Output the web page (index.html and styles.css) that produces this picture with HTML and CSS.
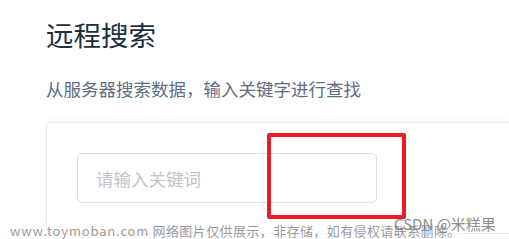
FILE: index.html
```html
<!DOCTYPE html>
<html lang="zh">
<head>
<meta charset="utf-8">
<link rel="stylesheet" href="styles.css">
</head>
<body>
<div class="page">
  <h3 class="title">远程搜索</h3>
  <p class="desc">从服务器搜索数据，输入关键字进行查找</p>
  <div class="card">
    <div class="demo">
      <div class="input"><span class="placeholder">请输入关键词</span></div>
    </div>
  </div>
</div>
<div class="mark"></div>
<div class="wm"><span class="wm-url">www.toymoban.com</span> 网络图片仅供展示，非存储，如有侵权请联系删除。</div>
<div class="csdn">CSDN @米糕果</div>
</body>
</html>
```
FILE: styles.css
```css
html, body {
  margin: 0;
  padding: 0;
  background: #ffffff;
  overflow: hidden;
  width: 509px;
  height: 239px;
}
body {
  font-family: "Noto Sans CJK SC", "Noto Sans", sans-serif;
  position: relative;
}
.page {
  padding: 14px 0 0 46px;
}
.title {
  margin: 0;
  font-size: 27.5px;
  font-weight: 400;
  line-height: 40px;
  color: #1f2f3d;
}
.desc {
  margin: 22px 0 0;
  font-size: 17.5px;
  line-height: 26px;
  color: #5e6d82;
}
.card {
  margin-top: 20px;
  height: 118px;
  border: 1px solid #e8e8ee;
  border-right: none;
  border-bottom: none;
  border-radius: 5px 0 0 0;
  box-shadow: 0 -2px 6px rgba(0, 0, 0, 0.03);
  box-sizing: border-box;
}
.demo {
  padding: 30px;
  border-bottom: 1px solid #e3e7f0;
}
.input {
  width: 300px;
  height: 50px;
  box-sizing: border-box;
  border: 1px solid #dcdfe6;
  border-radius: 5px;
  padding: 0 18px;
  display: flex;
  align-items: center;
}
.placeholder {
  font-size: 17.5px;
  color: #c0c4cc;
}
.mark {
  position: absolute;
  left: 267px;
  top: 133px;
  width: 139px;
  height: 86px;
  box-sizing: border-box;
  border: 4.5px solid #ec1c26;
  border-radius: 2px;
}
.wm {
  position: absolute;
  left: 10px;
  top: 222px;
  font-size: 13px;
  line-height: 17px;
  letter-spacing: 0.4px;
  color: rgba(120, 120, 120, 0.75);
  white-space: nowrap;
  background: rgba(255, 255, 255, 0.5);
}
.wm-url {
  letter-spacing: 0.85px;
}
.csdn {
  position: absolute;
  left: 394px;
  top: 214px;
  font-size: 15px;
  line-height: 20px;
  color: rgba(110, 110, 110, 0.8);
  white-space: nowrap;
}
```
